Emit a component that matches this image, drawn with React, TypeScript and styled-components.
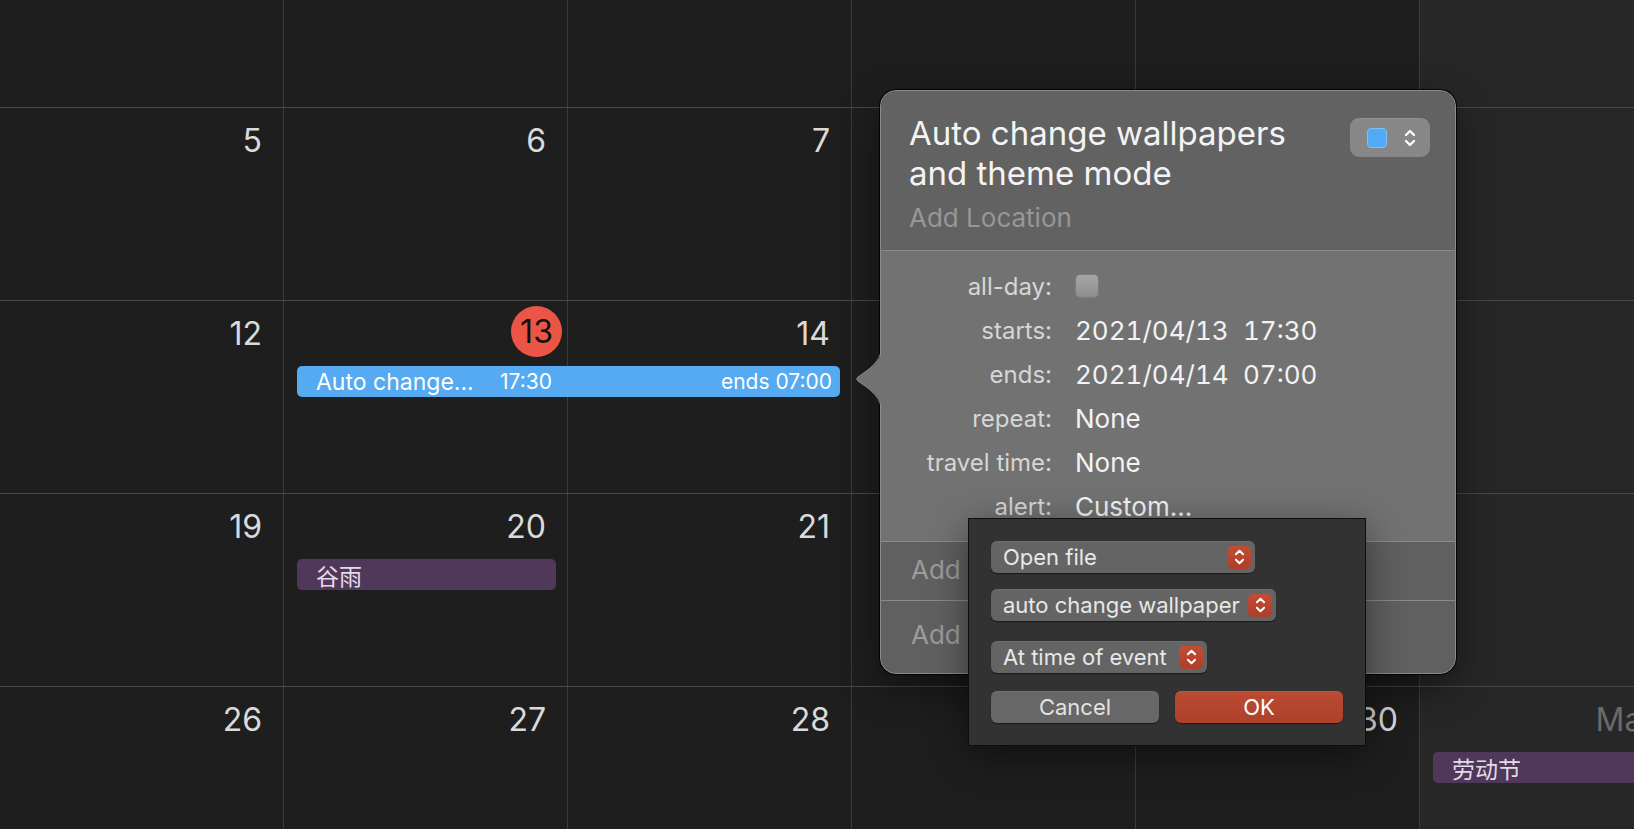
import React from "react";
import styled, { createGlobalStyle } from "styled-components";

const Global = createGlobalStyle`
  html, body { margin: 0; padding: 0; background: #1e1e1e; }
  body {
    font-family: Inter, "Noto Sans", "Noto Sans CJK SC", sans-serif;
    overflow: hidden;
    -webkit-font-smoothing: antialiased;
  }
  #root { width: 1634px; height: 829px; }
`;

const Screen = styled.div`
  position: relative;
  width: 1634px;
  height: 829px;
  overflow: hidden;
  background: #1e1e1e;
`;

const Calendar = styled.div`
  display: flex;
  flex-direction: column;
  width: 1704px;
`;

const Week = styled.div<{ $h: number }>`
  flex: 0 0 auto;
  display: grid;
  grid-template-columns: repeat(6, 284px);
  grid-template-rows: 65px 31px 1fr;
  height: ${(p) => p.$h}px;
  box-sizing: border-box;
  border-bottom: 1px solid #484848;
`;

const Day = styled.div<{ $col: number; $weekend?: boolean; $today?: boolean }>`
  grid-column: ${(p) => p.$col};
  grid-row: 1 / -1;
  box-sizing: border-box;
  background: ${(p) => (p.$weekend ? "#272727" : "#1e1e1e")};
  border-right: 1px solid #3b3b3b;
  display: flex;
  justify-content: flex-end;
  align-items: flex-start;
  padding-right: ${(p) => (p.$today ? 5 : 21)}px;
`;

const DayNum = styled.div<{ $dim?: boolean }>`
  margin-top: 14px;
  font-size: 32px;
  line-height: 38px;
  color: ${(p) => (p.$dim ? "#6a6a6a" : "#dadada")};
  white-space: nowrap;
`;

const TodayBadge = styled.div`
  margin-top: 5px;
  width: 51px;
  height: 51px;
  border-radius: 50%;
  background: #eb5545;
  color: #111;
  font-size: 32px;
  display: flex;
  align-items: center;
  justify-content: center;
`;

const EventBar = styled.div<{ $start: number; $span: number; $kind: "blue" | "holiday" }>`
  grid-row: 2;
  grid-column: ${(p) => p.$start} / span ${(p) => p.$span};
  margin: 0 12px 0 13px;
  border-radius: 5px;
  background: ${(p) => (p.$kind === "blue" ? "#55aaf1" : "#4f3859")};
  color: ${(p) => (p.$kind === "blue" ? "#ffffff" : "#e4dbe8")};
  display: flex;
  align-items: center;
  padding: 0 8px 0 19px;
  font-size: 23px;
  font-family: Inter, "Noto Sans CJK SC", sans-serif;
  white-space: nowrap;
  overflow: hidden;
`;

const EventTitle = styled.span`
  width: 184px;
  flex: 0 0 auto;
`;

const EventTime = styled.span<{ $end?: boolean }>`
  font-size: 21px;
  margin-left: ${(p) => (p.$end ? "auto" : "0")};
`;

/* ---------- Popover ---------- */

const Popover = styled.div`
  position: absolute;
  left: 880px;
  top: 90px;
  width: 576px;
  height: 584px;
  box-sizing: border-box;
  border: 1px solid #8c8c8c;
  border-radius: 16px;
  background: #727272;
  box-shadow: 0 0 0 1px rgba(0, 0, 0, 0.85), 0 14px 40px rgba(0, 0, 0, 0.45);
  display: flex;
  flex-direction: column;
`;

const Arrow = styled.svg`
  position: absolute;
  left: -26px;
  top: 259px;
  overflow: visible;
`;

const Header = styled.div`
  flex: 0 0 160px;
  box-sizing: border-box;
  background: #626262;
  border-radius: 15px 15px 0 0;
  border-bottom: 1px solid #8a8a8a;
  display: flex;
  align-items: flex-start;
  padding: 22px 25px 0 28px;
`;

const TitleBlock = styled.div`
  flex: 1;
`;

const Title = styled.div`
  font-size: 33px;
  line-height: 40px;
  font-weight: 400;
  color: #f4f4f4;
`;

const AddLocation = styled.div`
  margin-top: 10px;
  font-size: 26px;
  line-height: 30px;
  color: #979797;
`;

const ColorButton = styled.div`
  margin-top: 5px;
  width: 80px;
  height: 39px;
  box-sizing: border-box;
  border-radius: 9px;
  background: #878787;
  box-shadow: inset 0 1px 0 rgba(255, 255, 255, 0.08);
  display: flex;
  align-items: center;
  padding-left: 17px;
  gap: 16px;
`;

const Swatch = styled.div`
  width: 20px;
  height: 20px;
  box-sizing: border-box;
  border-radius: 4px;
  background: #52a9f5;
  border: 1px solid #7cc0f8;
`;

const Body = styled.div`
  flex: 0 0 291px;
  box-sizing: border-box;
  border-bottom: 1px solid #8a8a8a;
  display: grid;
  grid-template-columns: 171px 380px;
  grid-auto-rows: 44px;
  column-gap: 23px;
  align-items: center;
  align-content: start;
  padding-top: 13px;
`;

const Label = styled.div`
  text-align: right;
  font-size: 24px;
  color: #d6d6d6;
  white-space: nowrap;
`;

const Value = styled.div`
  font-size: 26px;
  color: #f3f3f3;
  white-space: nowrap;
`;

const DateTime = styled.div`
  display: grid;
  grid-template-columns: 168px max-content;
  font-feature-settings: "tnum" 1;
`;

const Checkbox = styled.div`
  width: 24px;
  height: 24px;
  box-sizing: border-box;
  border-radius: 5px;
  background: linear-gradient(#a6a6a6, #8d8d8d);
  border: 1px solid #7b7b7b;
`;

const AddRow = styled.div<{ $last?: boolean }>`
  flex: ${(p) => (p.$last ? "1 1 auto" : "0 0 59px")};
  box-sizing: border-box;
  background: #606060;
  border-bottom: ${(p) => (p.$last ? "none" : "1px solid #8a8a8a")};
  border-radius: ${(p) => (p.$last ? "0 0 15px 15px" : "0")};
  padding: ${(p) => (p.$last ? "19px" : "13px")} 0 0 30px;
  font-size: 26px;
  line-height: 30px;
  color: #9c9c9c;
  white-space: nowrap;
  overflow: hidden;
`;

/* ---------- Alert sheet ---------- */

const Sheet = styled.div`
  position: absolute;
  left: 968px;
  top: 518px;
  width: 398px;
  height: 228px;
  box-sizing: border-box;
  background: #323232;
  border: 1px solid #0e0e0e;
  box-shadow: 0 10px 36px rgba(0, 0, 0, 0.45);
  padding: 22px 22px 0 22px;
  display: flex;
  flex-direction: column;
  align-items: flex-start;
`;

const PopUp = styled.div<{ $w: number; $mb: number }>`
  width: ${(p) => p.$w}px;
  height: 32px;
  margin-bottom: ${(p) => p.$mb}px;
  box-sizing: border-box;
  border-radius: 6px;
  background: #646464;
  box-shadow: inset 0 1px 0 rgba(255, 255, 255, 0.07), 0 1px 1px rgba(0, 0, 0, 0.5);
  display: flex;
  align-items: center;
  justify-content: space-between;
  padding: 0 4px 0 12px;
  font-size: 22px;
  color: #e8e8e8;
  white-space: nowrap;
`;

const Stepper = styled.div`
  width: 24px;
  height: 23px;
  border-radius: 5px;
  background: linear-gradient(#c34c34, #ad3f2a);
  display: flex;
  align-items: center;
  justify-content: center;
`;

const ButtonRow = styled.div`
  display: flex;
  gap: 16px;
`;

const Button = styled.div<{ $primary?: boolean }>`
  width: 168px;
  height: 32px;
  box-sizing: border-box;
  border-radius: 6px;
  background: ${(p) => (p.$primary ? "linear-gradient(#bd4a33, #ad412b)" : "#676767")};
  box-shadow: inset 0 1px 0 rgba(255, 255, 255, 0.08), 0 1px 1px rgba(0, 0, 0, 0.5);
  color: ${(p) => (p.$primary ? "#ffffff" : "#e2e2e2")};
  font-size: 22px;
  display: flex;
  align-items: center;
  justify-content: center;
`;

const Chevrons = ({ w, h, sw }: { w: number; h: number; sw: number }) => (
  <svg width={w} height={h} viewBox="0 0 14 20" fill="none">
    <path
      d="M3 7 L7 3 L11 7 M3 13 L7 17 L11 13"
      stroke="#ffffff"
      strokeWidth={sw}
      strokeLinecap="round"
      strokeLinejoin="round"
    />
  </svg>
);

type Ev = { start: number; span: number; kind: "blue" | "holiday"; title: string; time?: string; end?: string };
type WeekData = { h: number; days: (string | null)[]; today?: number; dim?: number[]; events: Ev[] };

const weeks: WeekData[] = [
  { h: 108, days: [null, null, null, null, null, null], events: [] },
  { h: 193, days: ["5", "6", "7", "8", "9", "10"], events: [] },
  {
    h: 193,
    days: ["12", "13", "14", "15", "16", "17"],
    today: 1,
    events: [{ start: 2, span: 2, kind: "blue", title: "Auto change...", time: "17:30", end: "ends 07:00" }],
  },
  {
    h: 193,
    days: ["19", "20", "21", "22", "23", "24"],
    events: [{ start: 2, span: 1, kind: "holiday", title: "谷雨" }],
  },
  {
    h: 193,
    days: ["26", "27", "28", "29", "30", "May 1"],
    dim: [5],
    events: [{ start: 6, span: 1, kind: "holiday", title: "劳动节" }],
  },
];

const rows: { label: string; kind: "check" | "date" | "text"; date?: string; time?: string; text?: string }[] = [
  { label: "all-day:", kind: "check" },
  { label: "starts:", kind: "date", date: "2021/04/13", time: "17:30" },
  { label: "ends:", kind: "date", date: "2021/04/14", time: "07:00" },
  { label: "repeat:", kind: "text", text: "None" },
  { label: "travel time:", kind: "text", text: "None" },
  { label: "alert:", kind: "text", text: "Custom..." },
];

export default function App() {
  return (
    <>
      <Global />
      <Screen>
        <Calendar>
          {weeks.map((w, wi) => (
            <Week key={wi} $h={w.h}>
              {w.days.map((d, di) => (
                <Day key={di} $col={di + 1} $weekend={di === 5} $today={w.today === di}>
                  {d &&
                    (w.today === di ? (
                      <TodayBadge>{d}</TodayBadge>
                    ) : (
                      <DayNum $dim={w.dim?.includes(di)}>{d}</DayNum>
                    ))}
                </Day>
              ))}
              {w.events.map((e, ei) => (
                <EventBar key={ei} $start={e.start} $span={e.span} $kind={e.kind}>
                  <EventTitle>{e.title}</EventTitle>
                  {e.time && <EventTime>{e.time}</EventTime>}
                  {e.end && <EventTime $end>{e.end}</EventTime>}
                </EventBar>
              ))}
            </Week>
          ))}
        </Calendar>

        <Popover>
          <Arrow width="28" height="58" viewBox="0 0 28 58">
            <path
              d="M27 0 C26 12 13 20 3 27 Q0.5 29 3 31 C13 38 26 46 27 58 Z"
              fill="#727272"
            />
            <path
              d="M26 0 C25.5 12 13 20 3 27 Q0.5 29 3 31 C13 38 25.5 46 26 58"
              fill="none"
              stroke="#8c8c8c"
              strokeWidth="1"
            />
          </Arrow>
          <Header>
            <TitleBlock>
              <Title>
                Auto change wallpapers
                <br />
                and theme mode
              </Title>
              <AddLocation>Add Location</AddLocation>
            </TitleBlock>
            <ColorButton>
              <Swatch />
              <Chevrons w={14} h={20} sw={2.4} />
            </ColorButton>
          </Header>
          <Body>
            {rows.map((r) => (
              <React.Fragment key={r.label}>
                <Label>{r.label}</Label>
                <Value>
                  {r.kind === "check" && <Checkbox />}
                  {r.kind === "date" && (
                    <DateTime>
                      <span>{r.date}</span>
                      <span>{r.time}</span>
                    </DateTime>
                  )}
                  {r.kind === "text" && r.text}
                </Value>
              </React.Fragment>
            ))}
          </Body>
          <AddRow>Add Invitees</AddRow>
          <AddRow $last>Add Notes, URL, or Attachments</AddRow>
        </Popover>

        <Sheet>
          <PopUp $w={264} $mb={16}>
            Open file
            <Stepper>
              <Chevrons w={13} h={18} sw={2.2} />
            </Stepper>
          </PopUp>
          <PopUp $w={285} $mb={20}>
            auto change wallpaper
            <Stepper>
              <Chevrons w={13} h={18} sw={2.2} />
            </Stepper>
          </PopUp>
          <PopUp $w={216} $mb={18}>
            At time of event
            <Stepper>
              <Chevrons w={13} h={18} sw={2.2} />
            </Stepper>
          </PopUp>
          <ButtonRow>
            <Button>Cancel</Button>
            <Button $primary>OK</Button>
          </ButtonRow>
        </Sheet>
      </Screen>
    </>
  );
}
